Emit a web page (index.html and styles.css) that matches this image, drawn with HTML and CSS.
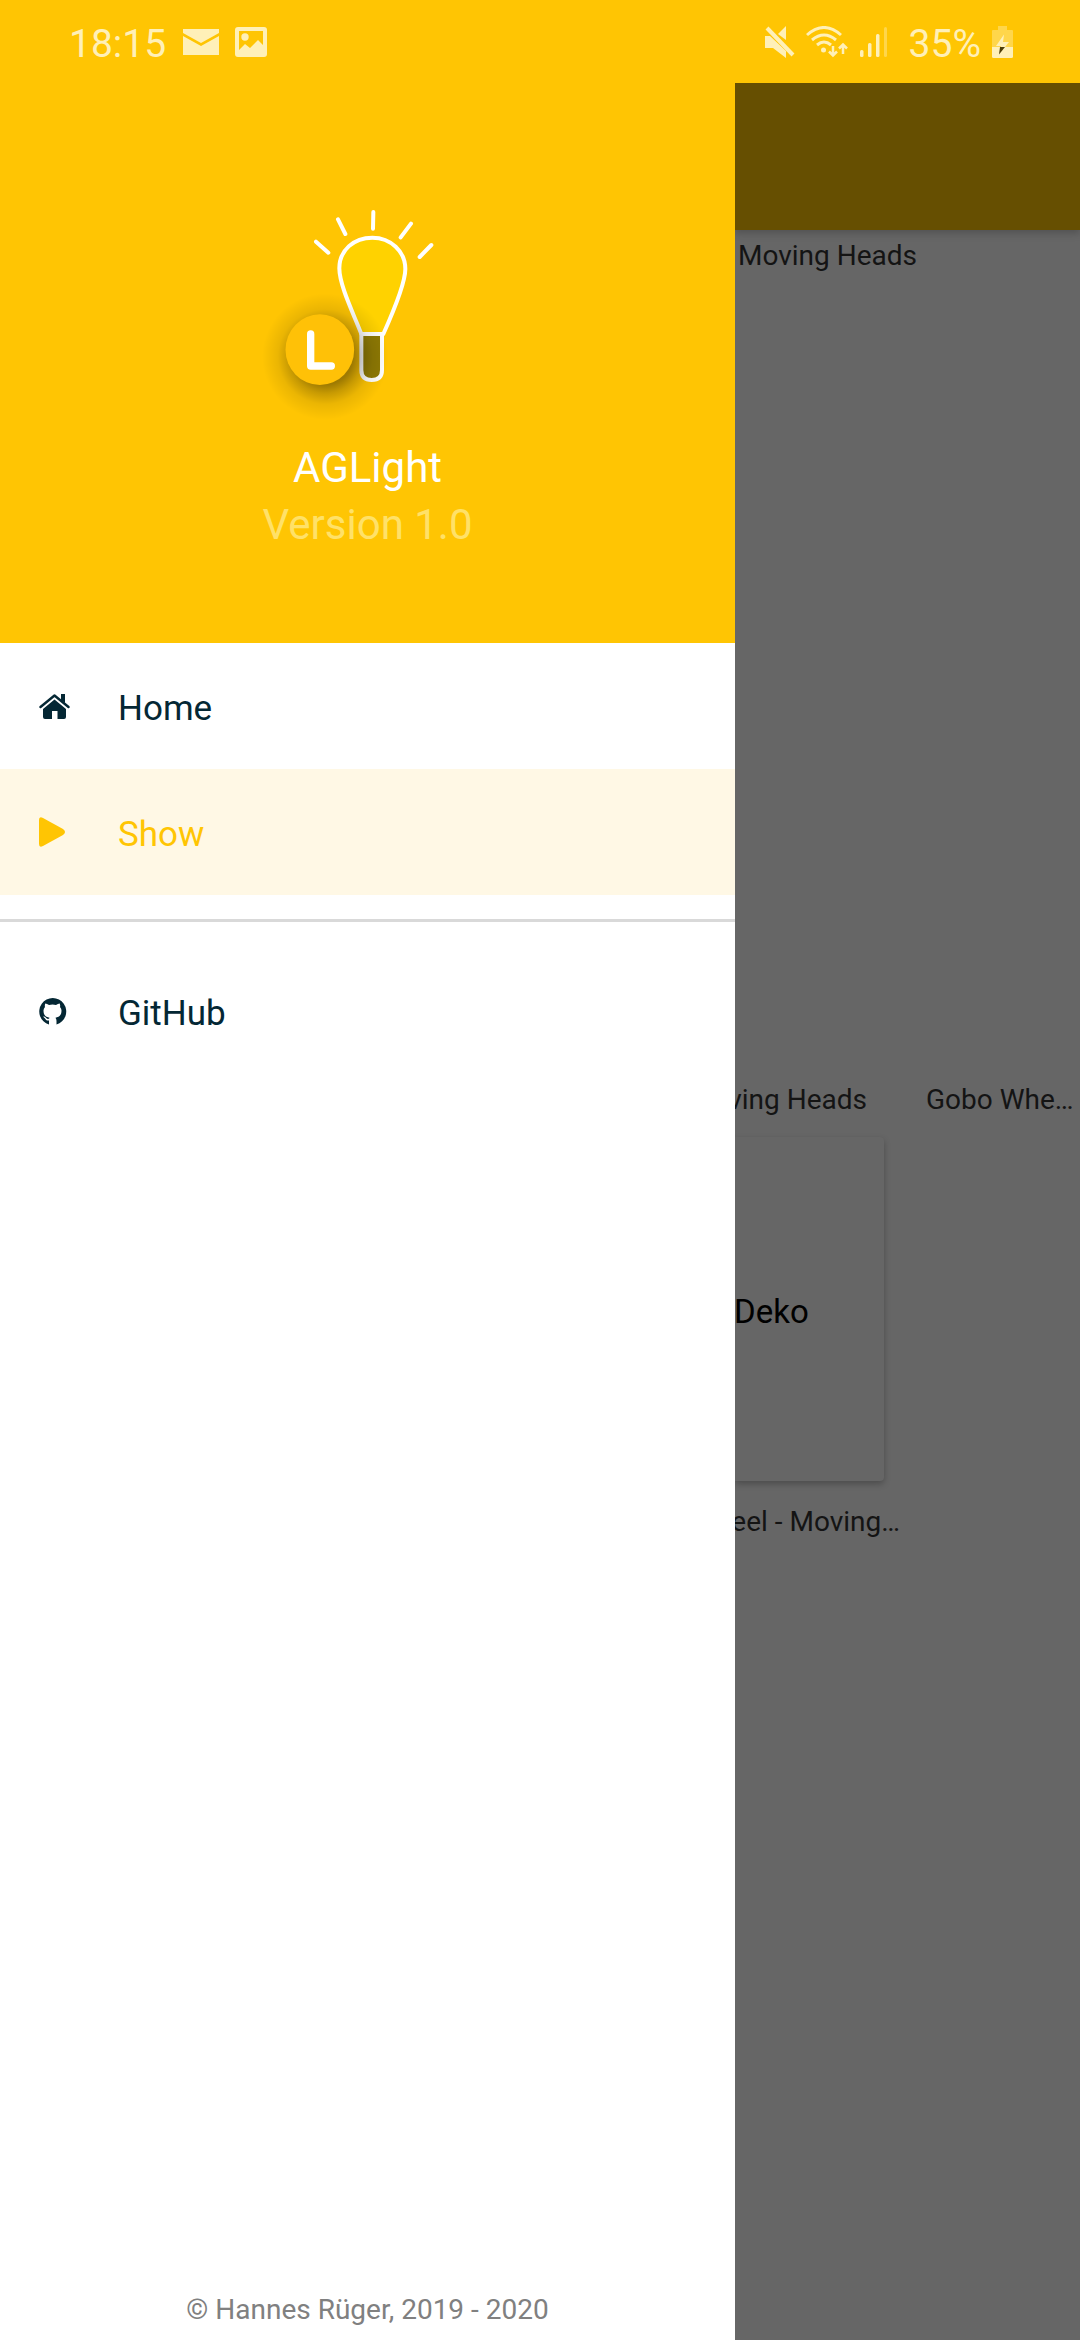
FILE: index.html
```html
<!DOCTYPE html>
<html lang="en">
<head>
<meta charset="utf-8">
<title>AGLight</title>
<link rel="stylesheet" href="styles.css">
</head>
<body>
<header class="status">
  <div class="status-left">
    <span class="clock">18:15</span>
    <svg class="mail" width="36" height="26" viewBox="0 0 36 26"><path d="M0 0H36V4L18 14 0 4Z"/><path d="M0 7L18 17 36 7V26H0Z"/></svg>
    <svg class="photo" width="32" height="30" viewBox="0 0 32 30"><path fill-rule="evenodd" d="M3 0H29Q32 0 32 3V27Q32 30 29 30H3Q0 30 0 27V3Q0 0 3 0ZM4 4V23L10 17 15 21 23 13 28 18V4Z"/><circle cx="10" cy="10" r="3.7"/></svg>
  </div>
  <div class="status-right">
    <svg class="mute" width="30" height="32" viewBox="0 0 30 32"><path d="M21 0V14L13 8Z"/><path d="M0 10H5L21 25V32L8 22H0Z"/><path d="M2 2L28 29" fill="none" stroke="#fff0b8" stroke-width="4"/></svg>
    <svg class="wifi" width="42" height="32" viewBox="0 0 42 32"><g fill="none" stroke="#fff0b8" stroke-width="3"><path d="M1 9Q18-6 35 9"/><path d="M6 14Q18 4 30 14"/><path d="M11 19Q18 13 25 19"/></g><circle cx="17.5" cy="24" r="2.5"/><path d="M27 20V29M23 25.500L27 29.500 31 25.500M37 28V19M33 22.500L37 18.500 41 22.500" fill="none" stroke="#fff0b8" stroke-width="2.500"/></svg>
    <svg class="signal" width="28" height="30" viewBox="0 0 28 30"><rect y="23" width="3.500" height="7" rx="1.500"/><rect x="8" y="16" width="3.500" height="14" rx="1.500"/><rect x="16" y="7" width="3.500" height="23" rx="1.500"/><rect x="24" y="0" width="3" height="30" rx="1.500" opacity=".4"/></svg>
    <span class="percent">35%</span>
    <svg class="battery" width="21" height="32" viewBox="0 0 21 32"><path opacity=".4" d="M6 0H15V4H20Q21 4 21 5V21H0V5Q0 4 1 4H6Z"/><path d="M0 21H21V30.500Q21 32 19.500 32H1.500Q0 32 0 30.500Z"/><path d="M12 8.500L4 20H9L7 28.500 17 16H11Z"/><path fill="#4d3d08" d="M8 21H13L7 28.500Z"/></svg>
  </div>
</header>
<div class="app">
  <nav class="drawer">
    <div class="brand">
      <svg class="logo" width="220" height="240" viewBox="0 0 660 720">
        <defs>
          <radialGradient id="shade" gradientUnits="userSpaceOnUse" cx="226" cy="500" r="190">
            <stop offset="0" stop-color="#000" stop-opacity=".48"/>
            <stop offset=".44" stop-color="#000" stop-opacity=".38"/>
            <stop offset=".58" stop-color="#000" stop-opacity=".22"/>
            <stop offset=".75" stop-color="#000" stop-opacity=".08"/>
            <stop offset="1" stop-color="#000" stop-opacity="0"/>
          </radialGradient>
        </defs>
        <g fill="none" stroke="#fff" stroke-width="12" stroke-linecap="round">
          <path d="M370 66L369 116M264 88L286 132M483 101L452 142M198 155L235 188M544 165L509 201"/>
          <path fill="#ffd200" d="M334 432C310 370 268 285 268 235C268 180 312 143 367 143C422 143 466 184 466 237C466 278 430 365 400 432"/>
          <path fill="#8f7a04" stroke-linejoin="round" d="M334 432H396V540Q396 570 365 570Q334 570 334 540Z"/>
        </g>
        <circle cx="226" cy="500" r="190" fill="url(#shade)"/>
        <ellipse cx="209.500" cy="479" rx="103" ry="106" fill="#ffc107"/>
        <path d="M182 432V528H244" fill="none" stroke="#fff" stroke-width="22" stroke-linecap="round" stroke-linejoin="round"/>
      </svg>
      <div class="name">AGLight</div>
      <div class="version">Version 1.0</div>
    </div>
    <a class="item">
      <svg width="31" height="25" viewBox="0 0 31 25"><path d="M1.500 13L15.500 1.500 29.500 13" fill="none" stroke="currentColor" stroke-width="2.400" stroke-linecap="round" stroke-linejoin="round"/><path d="M22 0H26V9L22 6Z"/><path d="M15.500 5.500L27 15V23Q27 25 25 25H18.500V17H13V25H6Q4 25 4 23V15Z"/></svg>
      <span>Home</span>
    </a>
    <a class="item active">
      <svg width="31" height="30" viewBox="0 0 31 30"><path d="M0 3Q0-1 4 1L24 12Q28 15 24 18L4 29Q0 31 0 27Z"/></svg>
      <span>Show</span>
    </a>
    <div class="rule"></div>
    <a class="item">
      <svg width="31" height="27" viewBox="0 0 31 27"><path d="M10 26.500V22.500C6.500 23 6.500 20.500 5 19.500C4 19 4 18.500 5 18.500C7 18.500 7 21 9 21C10 21 10.300 20.500 10.500 19.800C7 19 4.500 17.500 4.500 12.500Q4.500 10.500 6 9Q5.500 7.500 6.300 5.500Q8 5.500 10 7Q13.500 6.200 17 7Q19 5.500 20.700 5.500Q21.500 7.500 21 9Q22.500 10.500 22.500 12.500C22.500 17.500 20 19 16.500 19.800Q17.500 21 17.500 23V26.500A13.500 13.500 0 1 0 10 26.500Z"/></svg>
      <span>GitHub</span>
    </a>
    <footer class="copyright">© Hannes Rüger, 2019 - 2020</footer>
  </nav>
  <main class="page">
    <div class="appbar"></div>
    <div class="tiles">
      <div class="label first">Moving Heads</div>
      <div class="label heads"><span>Moving Heads</span></div>
      <div class="label gobo">Gobo Whe…</div>
      <div class="card">Deko</div>
      <div class="label wheel"><span>Wheel - Moving…</span></div>
    </div>
  </main>
</div>
</body>
</html>
```
FILE: styles.css
```css
* { box-sizing: border-box; }
body {
  margin: 0;
  width: 1080px;
  height: 2340px;
  display: flex;
  flex-direction: column;
  overflow: hidden;
  font-family: Roboto, sans-serif;
  background: #fff;
}
svg { display: block; flex: none; fill: currentColor; }

.status {
  height: 83px;
  flex: none;
  display: flex;
  justify-content: space-between;
  padding: 0 67px 0 69px;
  background: #ffc503;
  color: #fff0b8;
  font-size: 39px;
  line-height: 88px;
}
.status-left, .status-right { display: flex; align-items: flex-start; }
.mail { margin: 29px 0 0 17px; }
.photo { margin: 27px 0 0 16px; }
.mute { margin: 26px 11px 0 0; }
.wifi { margin: 26px 12px 0 0; }
.signal { margin: 27px 21px 0 0; }
.battery { margin: 26px 0 0 11px; }

.app { flex: 1; display: flex; min-height: 0; }
.drawer {
  width: 735px;
  flex: none;
  display: flex;
  flex-direction: column;
  background: #fff;
  color: #042734;
}
.brand {
  height: 560px;
  padding-top: 107px;
  background: #ffc503;
  color: #fff;
  text-align: center;
  font-size: 42px;
  line-height: 57px;
}
.logo { margin: 0 0 9px 250px; }
.version { color: #ffe168; }
.item {
  height: 126px;
  display: flex;
  align-items: center;
  gap: 48px;
  padding: 0 39px;
  font-size: 35px;
  line-height: 42px;
}
.item span { padding-top: 5px; }
.active { background: #fff8e5; color: #ffc503; }
.rule { height: 3px; margin: 24px 0 26px; background: #d9d9d9; }
.copyright {
  margin-top: auto;
  padding-bottom: 12px;
  text-align: center;
  font-size: 28px;
  line-height: 36px;
  color: #808080;
}

.page {
  flex: 1;
  min-width: 0;
  background: #666;
  color: #141414;
  overflow: hidden;
}
.appbar {
  height: 147px;
  background: #664f01;
  box-shadow: 0 3px 8px rgba(0, 0, 0, .22);
}
.tiles {
  display: grid;
  grid-template-columns: 149px 1fr;
  grid-template-rows: 63px 344px 78px 344px 78px 344px 78px;
}
.label {
  display: flex;
  align-items: flex-end;
  padding-bottom: 19px;
  font-size: 28px;
  line-height: 36px;
  white-space: nowrap;
}
.first { grid-area: 1 / 1 / 2 / 3; padding-left: 3px; }
.heads { grid-area: 5 / 1; margin-right: 17px; justify-content: flex-end; overflow: hidden; }
.gobo { grid-area: 5 / 2; padding-left: 42px; }
.card {
  grid-area: 6 / 1;
  display: flex;
  align-items: center;
  padding-top: 4px;
  border-radius: 0 4px 4px 0;
  background: #666;
  color: #000;
  font-size: 33px;
  text-indent: -1px;
  box-shadow: 0 3px 6px rgba(0, 0, 0, .25);
}
.wheel { grid-area: 7 / 1; margin-right: -16px; justify-content: flex-end; overflow: hidden; }
```
